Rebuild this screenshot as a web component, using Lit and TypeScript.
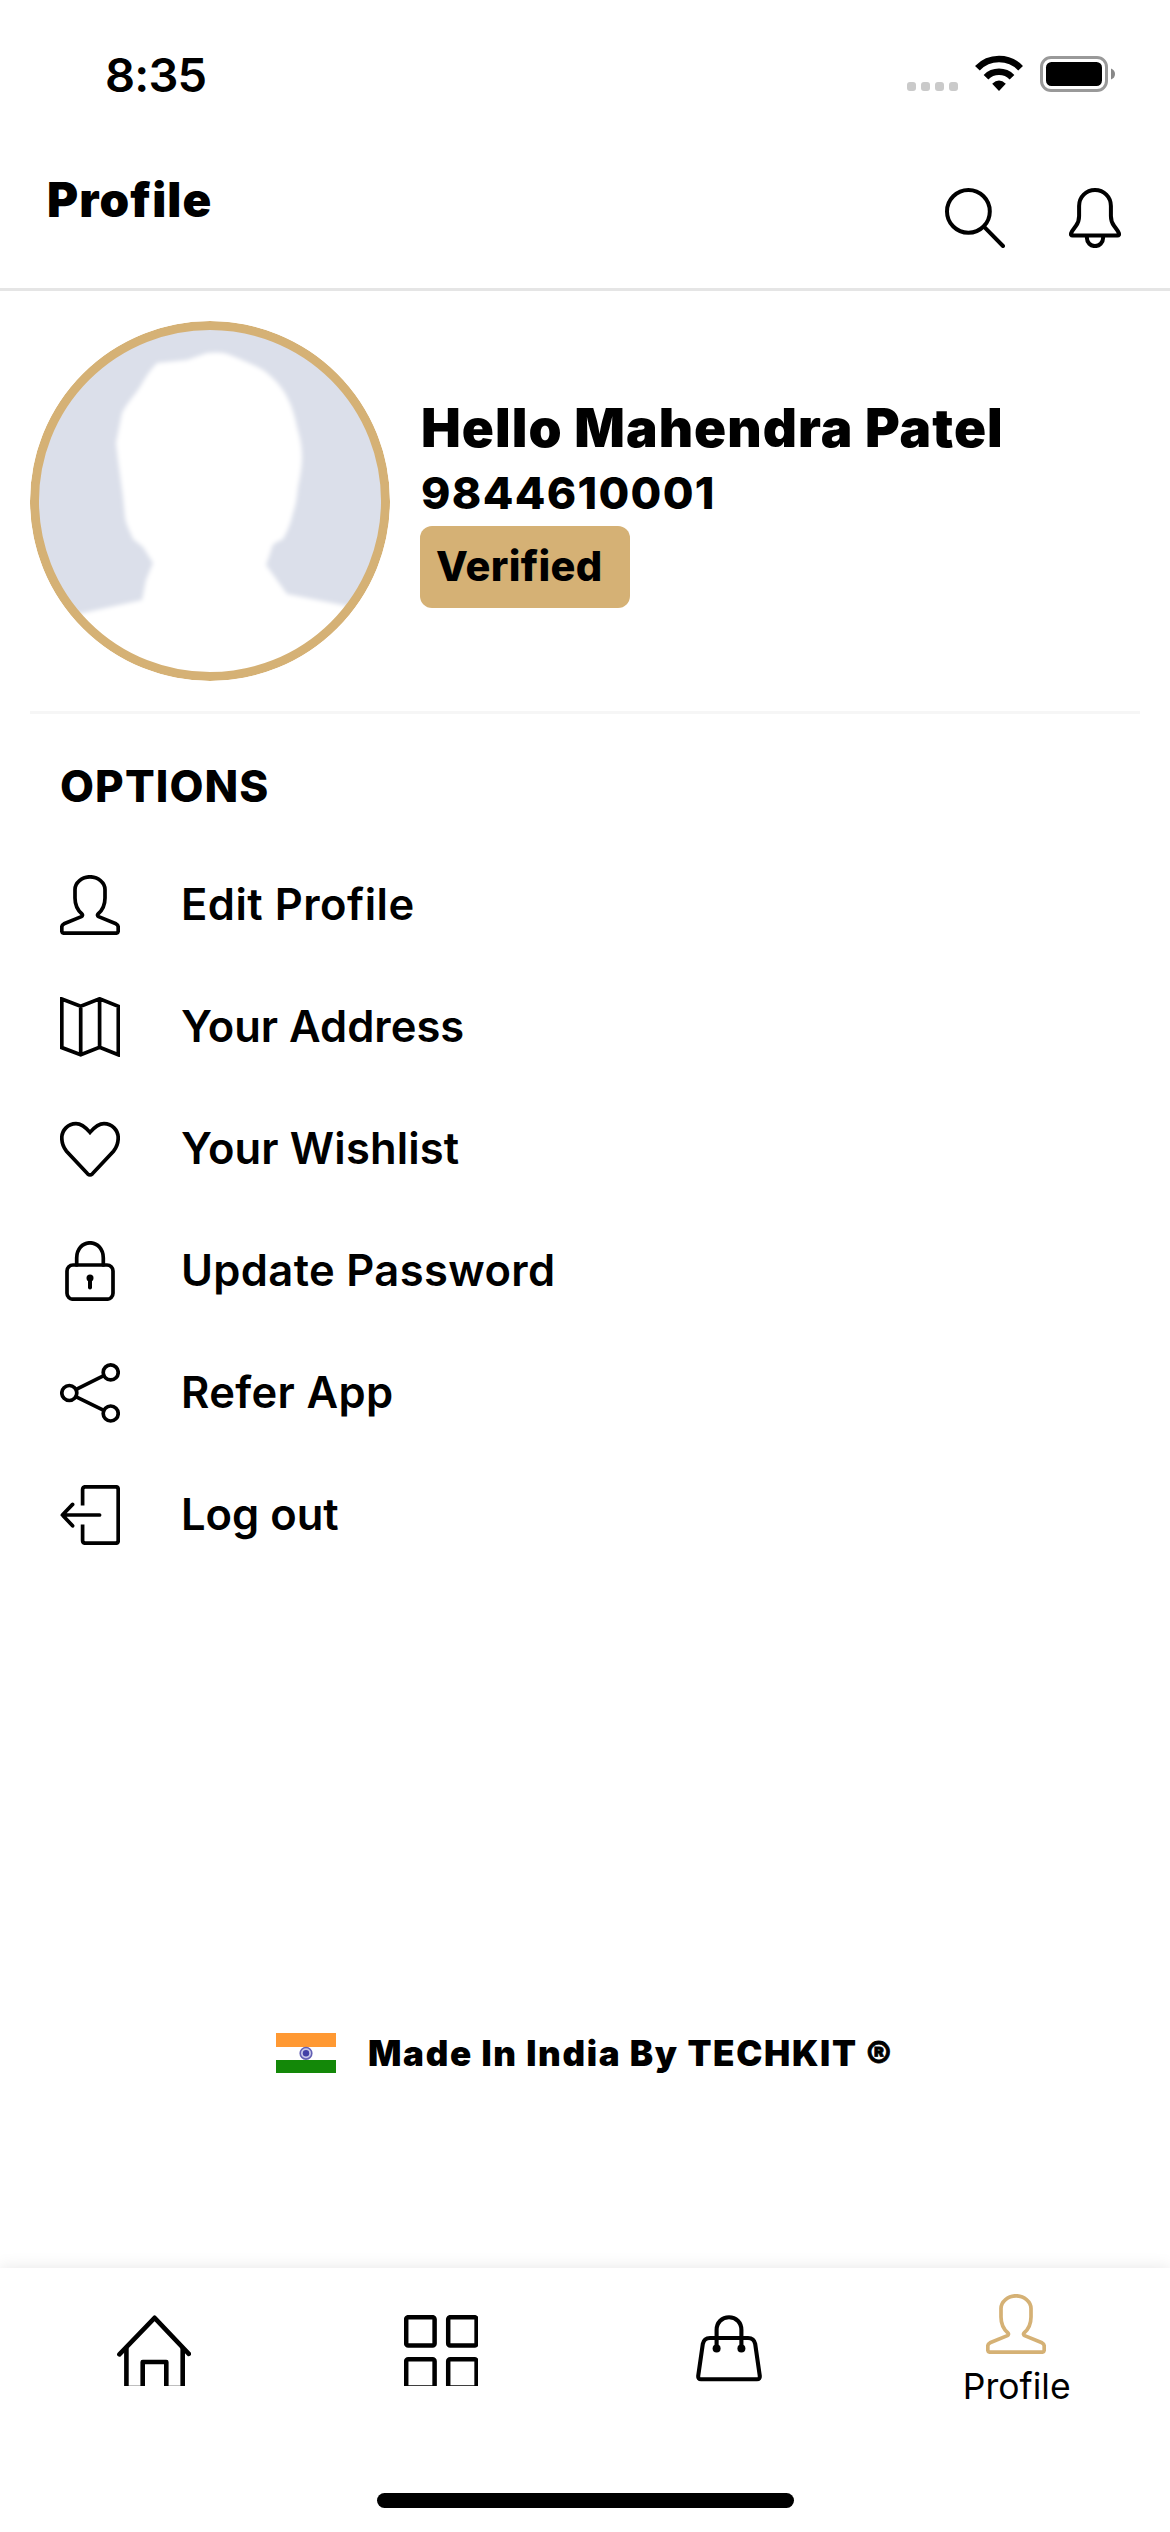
import { LitElement, html, css, svg } from "lit";
import { customElement } from "lit/decorators.js";

const userShape = svg`<path d="M30 1.8C22 1.8 15 7.6 15 14.5V23C15 30.5 18.2 35.8 22 39C22.8 39.8 22.6 41 21.4 41.6L4 48.8Q1.8 50 1.8 52V56Q1.8 58.2 4 58.2H56Q58.2 58.2 58.2 56V52Q58.2 50 56 48.8L38.6 41.6C37.4 41 37.2 39.8 38 39C41.8 35.8 45 30.5 45 23V14.5C45 7.6 38 1.8 30 1.8Z"/>`;

const mapShape = svg`<path stroke-linejoin="miter" d="M1.8 2L20.7 9.2L39.6 1.8L58.3 9.4V57.8L39.6 50.2L20.7 57.8L1.8 50.6ZM20.7 9.2V57.8M39.6 1.8V50.2"/>`;

const heartShape = svg`<path stroke-linejoin="miter" d="M30 13.4C26 8.8 22 4.7 16 4.7C8 4.7 1.8 11 1.8 19C1.8 24 3 28 6.5 32.2L27.6 54.8Q30 57 32.4 54.8L53.5 32.2C57 28 58.2 24 58.2 19C58.2 11 52 4.7 44 4.7C38 4.7 34 8.8 30 13.4Z"/>`;

const lockShape = svg`<rect x="7" y="24" width="46" height="34.2" rx="6"/><path d="M16.7 24V17C16.7 8 22.6 1.8 30 1.8S43.3 8 43.3 17V24"/><circle cx="30" cy="37" r="3.5" fill="currentColor" stroke="none"/><path stroke-width="4" d="M30 37V46.4"/>`;

const shareShape = svg`<circle cx="9.3" cy="30" r="7.5"/><circle cx="50.7" cy="9.4" r="7.5"/><circle cx="50.7" cy="50.5" r="7.5"/><path d="M16.2 26.4L43.8 12.6M16.2 33.8L43.8 47.4"/>`;

const logoutShape = svg`<path stroke-linecap="butt" d="M22.6 20.4V4.4Q22.6 1.8 25.2 1.8H55.6Q58.2 1.8 58.2 4.4V55.6Q58.2 58.2 55.6 58.2H25.2Q22.6 58.2 22.6 55.6V39.4"/><path d="M39.6 30H2.6M12.6 19.4L2.4 30L12.6 40.8"/>`;

const options = [
  { label: "Edit Profile", cls: "wide", shape: userShape },
  { label: "Your Address", cls: "", shape: mapShape },
  { label: "Your Wishlist", cls: "slim", shape: heartShape },
  { label: "Update Password", cls: "mid", shape: lockShape },
  { label: "Refer App", cls: "mid", shape: shareShape },
  { label: "Log out", cls: "", shape: logoutShape },
];

@customElement("app-root")
export class AppRoot extends LitElement {
  static styles = css`
    :host {
      display: flex;
      flex-direction: column;
      box-sizing: border-box;
      width: 1170px;
      height: 2532px;
      overflow: hidden;
      background: #fff;
      color: #000;
      font-family: Inter, "Liberation Sans", sans-serif;
      white-space: nowrap;
    }
    svg { display: block; flex: none; overflow: hidden; }
    .line { fill: none; stroke: currentColor; stroke-width: 3.7; stroke-linecap: round; stroke-linejoin: round; }
    .bold { stroke-width: 4; }

    .status { height: 150px; display: flex; justify-content: space-between; box-sizing: border-box; padding: 55px 55px 0 105px; }
    .clock { font-size: 47px; font-weight: 600; line-height: 39px; letter-spacing: -0.8px; }
    .signals { display: flex; align-items: flex-start; }
    .dots { display: flex; gap: 5px; padding-top: 27px; margin-right: 17px; }
    .dot { width: 9px; height: 9px; border-radius: 3px; background: #cacaca; }
    .wifi { margin-right: 17px; }
    .battery { margin-top: 1px; }

    .header { height: 138px; display: flex; justify-content: space-between; box-sizing: border-box; padding: 20px 49px 0 47px; }
    .title { margin: 0; font-size: 47.5px; font-weight: 900; line-height: 60px; letter-spacing: 1.1px; }
    .actions { display: flex; gap: 64px; padding-top: 18px; }
    .rule { height: 3px; background: #e5e5e5; flex: none; }

    .card { margin: 0 30px; padding: 30px 0; display: flex; gap: 30px; border-bottom: 3px solid #f6f6f6; }
    .avatar { width: 360px; height: 360px; border-radius: 50%; }
    .who { display: flex; flex-direction: column; align-items: flex-start; padding-top: 72px; }
    .name { font-size: 53px; font-weight: 900; line-height: 70px; letter-spacing: 1.05px; padding-left: 1px; }
    .phone { font-size: 44.5px; font-weight: 800; line-height: 60px; letter-spacing: 1.35px; padding-left: 1px; }
    .badge { width: 210px; height: 82px; margin-top: 3px; box-sizing: border-box; padding-left: 16px; border-radius: 12px; background: #d5b175; font-size: 41.5px; font-weight: 800; line-height: 80px; letter-spacing: 0.3px; }

    .section { margin: 0; padding: 42px 0 0 60px; height: 88px; font-size: 44px; font-weight: 800; line-height: 60px; letter-spacing: 1.1px; }
    .list { display: flex; flex-direction: column; }
    .row { height: 122px; padding-left: 60px; display: flex; align-items: center; gap: 61px; font-size: 43.5px; font-weight: 600; }
    .label { line-height: 60px; padding-bottom: 2px; }
    .slim { letter-spacing: 0.15px; }
    .wide { letter-spacing: 0.5px; }
    .mid { letter-spacing: 0.35px; }

    .made { margin-top: 457px; padding-left: 276px; display: flex; align-items: center; gap: 32px; height: 40px; font-size: 35px; font-weight: 900; letter-spacing: 1.65px; }
    .credit { line-height: 40px; }
    .mark { font-size: 38px; line-height: 1px; vertical-align: -3px; -webkit-text-stroke: 0.8px currentColor; }
    .flag { width: 60px; height: 40px; }

    .tabs { margin-top: auto; height: 264px; display: flex; flex-direction: column; justify-content: space-between; align-items: center; background: #fff; box-shadow: 0 0 16px rgba(0, 0, 0, 0.1); flex: none; }
    .tabrow { display: flex; align-self: stretch; padding-left: 10px; }
    .tab { flex: none; width: 287.5px; display: flex; flex-direction: column; align-items: center; padding-top: 47px; box-sizing: border-box; }
    .tab.on { padding-top: 26px; }
    .gold { color: #d5b175; }
    .tablabel { font-size: 35.5px; line-height: 44px; margin-top: 11px; padding-left: 1px; }
    .homebar { width: 417px; height: 15px; margin-bottom: 24px; border-radius: 8px; background: #000; }
  `;

  render() {
    return html`
      <div class="status">
        <div class="clock">8:35</div>
        <div class="signals">
          <div class="dots">${[0, 1, 2, 3].map(() => html`<div class="dot"></div>`)}</div>
          <svg class="wifi" width="48" height="36" viewBox="0 0 48 36">
            <path fill="none" stroke="#000" stroke-width="6.6" d="M2.4 13.2A30 30 0 0 1 45.6 13.2M11 22.2A18.3 18.3 0 0 1 37 22.2"/>
            <path d="M17.2 28.8Q24 22 30.8 28.8L24 36Z"/>
          </svg>
          <svg class="battery" width="75" height="36" viewBox="0 0 75 36">
            <rect x="1.5" y="1.5" width="65" height="33" rx="9.5" fill="none" stroke="#999" stroke-width="3"/>
            <rect x="6" y="6" width="56" height="24" rx="5.5"/>
            <path fill="#888" d="M71 12.5Q75 14 75 18T71 23.5Z"/>
          </svg>
        </div>
      </div>

      <div class="header">
        <h1 class="title">Profile</h1>
        <div class="actions">
          <svg class="line bold" width="60" height="60" viewBox="0 0 60 60"><circle cx="23.4" cy="23.4" r="21.4"/><path d="M39.4 39.2L58 58"/></svg>
          <svg class="line bold" width="52" height="60" viewBox="0 0 52 60"><path d="M26 2C17 2 10.1 9 10.1 18V28C10.1 32.5 9.8 34 7 37.8C4.6 41 3 42.8 2.1 45.2Q1.4 47.6 3.6 47.6H48.4Q50.6 47.6 49.9 45.2C49 42.8 47.4 41 45 37.8C42.2 34 41.9 32.5 41.9 28V18C41.9 9 35 2 26 2ZM17.9 48.4V50A8.1 8.1 0 0 0 34.1 50V48.4"/></svg>
        </div>
      </div>
      <div class="rule"></div>

      <div class="card">
        <svg class="avatar" viewBox="0 0 360 360">
          <defs>
            <clipPath id="disc"><circle cx="180" cy="180" r="173"/></clipPath>
            <filter id="soft"><feGaussianBlur stdDeviation="2"/></filter>
          </defs>
          <circle cx="180" cy="180" r="173" fill="#dbdfea"/>
          <g clip-path="url(#disc)">
            <path fill="#fff" filter="url(#soft)" d="M177 32C186 31 194 31 200 34C212 39 223 43 233 49C244 57 252 66 257 76C262 85 265 96 267 106C270 116 272 126 272 136C272 146 270 156 268 166C267 175 266 184 263 192C261 202 257 211 253 218C250 220 244 221 242 226C240 233 238 238 236 244L257 273L317 285L360 292V370H0V300L53 292L112 279L116 259L123 242L113 226L103 218C100 210 96 204 95 196L93 176L88 139L86 122L92 92C97 82 104 75 110 66C115 57 120 49 127 42L157 39Z"/>
          </g>
          <circle cx="180" cy="180" r="175.5" fill="none" stroke="#d5b175" stroke-width="9"/>
        </svg>
        <div class="who">
          <div class="name">Hello Mahendra Patel</div>
          <div class="phone">9844610001</div>
          <div class="badge">Verified</div>
        </div>
      </div>

      <h2 class="section">OPTIONS</h2>
      <div class="list">
        ${options.map(
          (o) => html`<div class="row">
            <svg class="line" width="60" height="60" viewBox="0 0 60 60">${o.shape}</svg>
            <span class="label ${o.cls}">${o.label}</span>
          </div>`
        )}
      </div>

      <div class="made">
        <svg class="flag" viewBox="0 0 60 40">
          <rect width="60" height="14" fill="#ff9933"/>
          <rect y="14" width="60" height="13" fill="#fff"/>
          <rect y="27" width="60" height="13" fill="#138808"/>
          <circle cx="30" cy="20.3" r="5.8" fill="#c9c8ea" stroke="#6360b4" stroke-width="1.6"/>
          <circle cx="30" cy="20.3" r="3.2" fill="#4340a6"/>
        </svg>
        <span class="credit">Made In India By TECHKIT <span class="mark">®</span></span>
      </div>

      <div class="tabs">
        <div class="tabrow">
          <div class="tab"><svg class="line" width="74" height="71.4" viewBox="0 0 74 71.4"><g stroke-width="4.6"><path d="M2.4 39.4L37.6 2.8L71.8 38.8"/><path stroke-linecap="butt" d="M9.4 33V73H25.7V47H49.3V73H65.7V33"/></g></svg></div>
          <div class="tab"><svg class="line" width="74" height="71.4" viewBox="0 0 74 71.4"><g stroke-width="4.5"><rect x="2.2" y="2.2" width="28.4" height="28.4" rx="2"/><rect x="44.2" y="2.2" width="28.4" height="28.4" rx="2"/><rect x="2.2" y="44.2" width="28.4" height="28.4" rx="2"/><rect x="44.2" y="44.2" width="28.4" height="28.4" rx="2"/></g></svg></div>
          <div class="tab"><svg class="line" width="66" height="67" viewBox="0 0 66 67"><g stroke-width="4.1"><path d="M14 23H52Q58 23 59.2 29L63.8 61Q64 64.3 61 64.3H5Q2 64.3 2.2 61L6.8 29Q8 23 14 23Z"/><path d="M20.6 33V15C20.6 7.5 26 2.2 33 2.2S45.4 7.5 45.4 15V33"/></g><circle cx="20.6" cy="33.4" r="4" fill="currentColor" stroke="none"/><circle cx="45.4" cy="33.4" r="4" fill="currentColor" stroke="none"/></svg></div>
          <div class="tab on"><svg class="line gold" width="60" height="60" viewBox="0 0 60 60">${userShape}</svg><span class="tablabel">Profile</span></div>
        </div>
        <div class="homebar"></div>
      </div>
    `;
  }
}
